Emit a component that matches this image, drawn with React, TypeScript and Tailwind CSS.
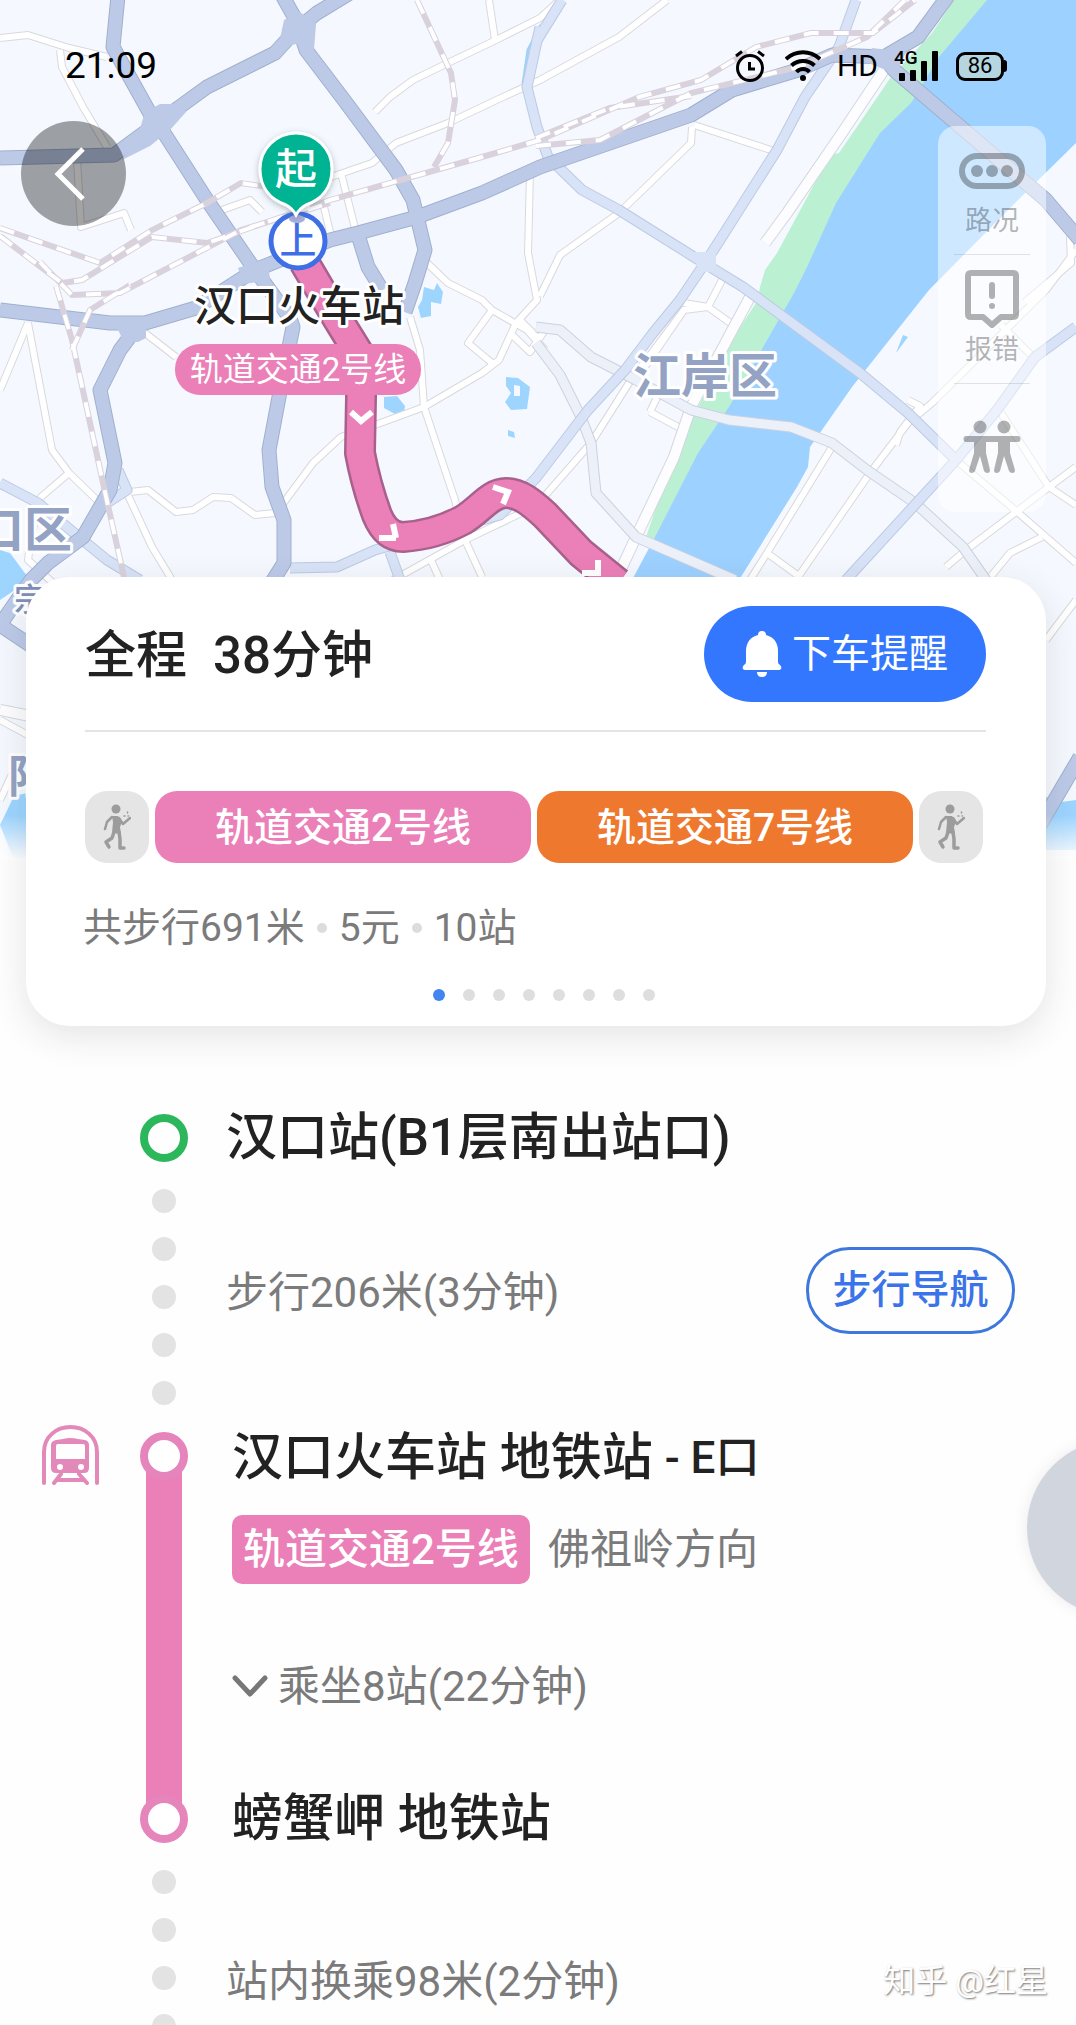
import React from "react";

type RoadSet = { paths: string[]; edge: string; fill: string; width: number };

const roadSets: RoadSet[] = [
  {
    edge: "#d9d9dd",
    fill: "#ffffff",
    width: 6,
    paths: [
      "M0 38L28 35L69 48L107 57",
      "M60 50L62 67L83 107L107 147",
      "M77 160L81 227L124 213L131 230",
      "M489 0L495 40",
      "M375 112L390 97L413 80L450 62L496 40L540 18L562 -2",
      "M331 177L372 163L396 143L448 123L503 97L540 80L619 37L667 0",
      "M341 173L356 232",
      "M324 207L331 236",
      "M222 210L250 200L262 212",
      "M530 173L528 253L537 300L516 323L499 360L482 373L424 407L375 425L341 437L313 463L282 505",
      "M540 296L560 255L619 213L691 143L692 127",
      "M427 263L448 283L482 300L492 310L527 330L545 350",
      "M492 310L468 343L492 363",
      "M520 320L540 340M510 333L530 352L545 330",
      "M410 317L420 350L424 407L455 500L465 540L482 577",
      "M28 323L52 450L69 473L100 503",
      "M28 323L0 390",
      "M69 473L41 497L31 537L28 560L52 582",
      "M120 493L148 490L176 512L193 510L213 497L231 498L255 515L275 513",
      "M127 493L152 547L172 580",
      "M145 333L176 357",
      "M393 580L465 540L536 506L591 443L629 383L684 310L708 307L736 327",
      "M430 558L440 580",
      "M694 125L777 152",
      "M722 280L708 307L684 303",
      "M684 310L660 345L636 380",
      "M650 412L663 385M650 412L680 428",
      "M832 447L767 553L750 580",
      "M767 553L800 577",
      "M1076 250L1046 290L932 403L908 423L870 473L798 577",
      "M908 400L920 406L900 432L896 445",
      "M956 460L1015 510L1076 563",
      "M1076 467L1049 487L966 550L946 567",
      "M1001 413L1049 487L1076 505",
      "M1042 537L1010 553L988 580",
      "M1070 236L1071 263L1025 302",
      "M1001 325L1036 360",
      "M1076 600L1046 640",
      "M0 720L28 735",
      "M0 800L14 770",
    ],
  },
  {
    edge: "#d3d7e0",
    fill: "#fdfdff",
    width: 10,
    paths: [
      "M884 70L842 133L787 213L765 243",
      "M750 297L691 407L674 457L636 537L616 580",
      "M0 710L30 716",
    ],
  },
  {
    edge: "#ccd1de",
    fill: "#ecf0f9",
    width: 9,
    paths: [
      "M536 327L560 330L591 357L636 380L691 410L729 420L791 427L832 443L867 470L915 503L963 547L986 580",
      "M536 343L560 375L581 417L591 443L596 493L636 537L735 580",
    ],
  },
  {
    edge: "#bccae2",
    fill: "#d8e3f7",
    width: 9,
    paths: [
      "M856 0L839 47L805 97L777 150L718 243L705 263L680 300L653 333L625 370L588 410L536 478L500 515L375 550L337 567L290 568",
      "M540 27L527 87L537 127L548 157L582 190L619 210L694 257L743 287L860 373L908 413L956 460L846 580",
      "M956 460L997 410L1035 357L1076 327",
      "M562 0L536 42",
      "M0 483L38 503L79 537L107 560L140 580",
      "M118 470L127 490L107 503",
      "M390 552L400 580",
    ],
  },
  {
    edge: "#9fb0cd",
    fill: "#bccae8",
    width: 13,
    paths: [
      "M118 -4L113 47L152 117L164 133L207 200L255 270L290 318L293 327L279 397L269 450L272 487L284 520L284 563L272 582",
      "M0 158L114 155L152 127L207 87L275 53L296 30L317 13L350 -7",
      "M282 -5L296 20L306 50L344 100L396 170L413 200L425 250L415 283L405 312",
      "M0 310L110 323L145 323L196 308L255 270L330 240L358 233L417 217L482 193L540 167L691 115L732 90L798 70L832 55L884 57L918 37L948 -4",
      "M884 57L894 70L1046 200L1080 240",
      "M138 326L120 350L100 390L115 463L110 490L83 537L48 563L31 580L0 625",
      "M0 625L30 645",
      "M358 235L368 267L382 290",
      "M1080 757L1040 825",
    ],
  },
];

const rails = [
  "M417 0L451 73L455 100L448 143L434 167",
  "M0 228L100 263L152 230L207 203L241 183L275 188",
  "M0 236L62 283L82 280L152 237L207 243L330 200L482 157L540 140L639 97L701 80L756 47L811 33L873 33L915 0",
  "M40 262L72 295L120 293L241 230L330 203",
  "M56 286L72 340L103 483L124 577",
  "M72 350L90 310L130 285",
  "M536 146L600 140L691 93L798 67L867 37L905 0",
  "M536 138L610 108L691 96",
];

const route =
  "M304 262L337 318L361 357L361 397L360 453Q366 485 377 515Q386 537 403 537Q435 535 463 520C480 510 490 493 506 493C520 493 532 503 545 515L581 553L618 583";

const cjk = 'Roboto, "Noto Sans CJK SC", sans-serif';

function MapCanvas() {
  return (
    <svg
      className="absolute inset-x-0 top-0 h-[860px] w-full"
      viewBox="0 0 1076 860"
      preserveAspectRatio="xMidYMin slice"
      role="img"
      aria-label="路线地图"
    >
      <defs>
        <linearGradient id="mapFade" x1="0" y1="0" x2="0" y2="1">
          <stop offset="0" stopColor="#fff" stopOpacity="0" />
          <stop offset="1" stopColor="#fff" />
        </linearGradient>
        <filter id="pinShadow" x="-30%" y="-30%" width="160%" height="160%">
          <feDropShadow dx="0" dy="2" stdDeviation="3" floodColor="#4b5563" floodOpacity="0.4" />
        </filter>
      </defs>
      <rect width="1076" height="860" fill="#f5f9ff" />

      <path
        d="M954 0L932 33L891 77L839 153L830 155L777 253L765 270L760 287L758 300L725 350L670 467L646 537L658 540L700 453L731 407L796 293L838 203L882 133L913 103L941 57L989 0Z"
        fill="#bcf0d2"
      />
      <path
        d="M987 0L939 57L911 103L880 133L836 203L808 265L794 293L729 407L698 453L655 537L632 580L739 580L797 487L808 467L810 447L822 430L852 387L929 290L1018 200L1076 143V0Z"
        fill="#9dd1ff"
      />
      <g fill="#9dd5ff">
        <path d="M424 287L434 290L437 283L443 292L441 304L431 302L431 316L421 318L418 307L422 300Z" />
        <path d="M384 397L397 396L405 406L404 412L395 414L384 408Z" />
        <path fillRule="evenodd" d="M506 377L518 378L530 387L527 409L511 410L505 402L511 393L506 386ZM514 385L520 386L520 396L514 396Z" />
        <path d="M508 430L514 432L515 438L508 436Z" />
        <path d="M0 550L10 553L30 580L0 600Z" />
        <path d="M14 796L40 790V860H14L0 825Z" />
        <path d="M1040 805L1076 800V850H1040Z" />
        <path d="M903 335L908 337L896 353Z" />
      </g>
      <path d="M1040 797H1062L1050 805H1040Z" fill="#b9e8d6" />
      <path d="M541 25L528 50L523 84" fill="none" stroke="#9fd2fb" strokeWidth="3" />

      {roadSets.map((set) => (
        <g key={set.fill} fill="none" strokeLinejoin="round">
          {set.paths.map((d) => (
            <path key={"e" + d} d={d} stroke={set.edge} strokeWidth={set.width + 2} />
          ))}
          {set.paths.map((d) => (
            <path key={"f" + d} d={d} stroke={set.fill} strokeWidth={set.width} />
          ))}
        </g>
      ))}
      <g fill="#bccae8">
        <path d="M138 135L145 112L160 104L178 104L186 112L170 130L150 146L122 160Z" />
        <path d="M278 48L284 20L300 12L316 24L314 50L296 44Z" />
        <path d="M238 268L268 258L270 280L244 284Z" />
        <path d="M112 318H146V338L138 342H124Z" />
        <path d="M872 48L906 52L896 74L866 62Z" />
      </g>
      <path d="M694 252H716V272H698Z" fill="#d8e3f7" />

      <g fill="none">
        {rails.map((d) => (
          <path key={"r" + d} d={d} stroke="#d9d2dc" strokeWidth="6" />
        ))}
        {rails.map((d) => (
          <path key={"w" + d} d={d} stroke="#fff" strokeWidth="4" strokeDasharray="15 15" />
        ))}
      </g>

      <g fill="none" strokeLinejoin="round">
        <path d={route} stroke="#a8608c" strokeWidth="32" />
        <path d={route} stroke="#eb7fb8" strokeWidth="27" />
      </g>
      <g fill="none" stroke="#fff" strokeWidth="6">
        <path d="M351 412L361 421L372 412" />
        <path d="M379 538H396M396 538L393 524" />
        <path d="M493 487L508 492L503 504" />
        <path d="M582 573H598V560" />
      </g>

      <g fontFamily={cjk} fontWeight="500" stroke="#fff" strokeWidth="6" strokeLinejoin="round" paintOrder="stroke">
        <g fontWeight="700" fill="#94a3c4">
          <text x="633" y="393" fontSize="48">江岸区</text>
          <text x="-24" y="547" fontSize="48">口区</text>
          <text x="8" y="793" fontSize="45">阳区</text>
        </g>
        <text x="14" y="611" fontSize="32" fill="#7f90b8">宗关</text>
        <text x="194" y="321" fontSize="42" fill="#222">汉口火车站</text>
      </g>

      <rect x="175" y="344" width="246" height="51" rx="25" fill="#eb7fb8" />
      <text x="298" y="381" fontSize="33" textAnchor="middle" fontFamily={cjk} fill="#fff">轨道交通2号线</text>

      <circle cx="298" cy="241" r="27" fill="#fff" stroke="#3f6fe6" strokeWidth="5" />
      <text x="298" y="254" fontSize="37" textAnchor="middle" fontFamily={cjk} fontWeight="500" fill="#3f6fe6">上</text>
      <ellipse cx="297" cy="219" rx="8" ry="4" fill="#a9b1dc" />
      <path
        d="M296 133A36 36 0 0 1 332 169C332 189 320 200 306 205Q300 208 296 215Q292 208 286 205C272 200 260 189 260 169A36 36 0 0 1 296 133Z"
        fill="#06b393"
        stroke="#fff"
        strokeWidth="3"
        filter="url(#pinShadow)"
      />
      <text x="296" y="184" fontSize="42" textAnchor="middle" fontFamily={cjk} fontWeight="500" fill="#fff">起</text>

      <rect y="815" width="1076" height="45" fill="url(#mapFade)" />
    </svg>
  );
}

function StatusBar() {
  return (
    <header className="relative flex h-30 items-start justify-between pt-10 pr-[69px] pl-[65px] text-black">
      <time className="text-[37px] leading-[52px]">21:09</time>
      <div className="flex h-[52px] items-center">
        <svg className="h-8 w-7.5" viewBox="0 0 30 32" fill="none" stroke="#000" strokeWidth="3" aria-label="闹钟">
          <circle cx="15" cy="18" r="12.5" />
          <path d="M14.500 12V19H20M1 6L7 1.500M29 6L23 1.500" />
        </svg>
        <svg className="ml-5 h-8 w-9" viewBox="0 0 36 32" fill="none" stroke="#000" strokeWidth="4" aria-label="无线网络">
          <path d="M1 9C11 0 25 0 35 9M6.500 15.500C13 9.500 23 9.500 29.500 15.500M11.500 22C15 18 21 18 24.500 22" />
          <circle cx="18" cy="28" r="3" fill="#000" stroke="none" />
        </svg>
        <span className="ml-4 text-[30px] leading-8">HD</span>
        <span className="relative ml-4 block h-8 w-11">
          <span className="absolute top-0 left-0 text-[19px] leading-4 font-medium">4G</span>
          <svg className="size-full" viewBox="0 0 44 32" fill="#000" aria-label="信号">
            <rect x="5" y="23" width="6" height="8" rx="1" />
            <rect x="16" y="20" width="6" height="11" rx="1" />
            <rect x="27" y="11" width="6" height="20" rx="1" />
            <rect x="38" y="1" width="6" height="30" rx="1" />
          </svg>
        </span>
        <span className="ml-[18px] flex items-center">
          <span className="flex h-[29px] w-12 items-center justify-center rounded-[9px] border-[3px] border-black bg-[#b5d5e0] text-[22px] leading-none">
            86
          </span>
          <span className="h-3 w-[3px] rounded-r bg-black" />
        </span>
      </div>
    </header>
  );
}

function MapTools() {
  return (
    <nav className="mt-1.5 flex h-[386px] w-[108px] flex-col items-center rounded-[18px] bg-white/50 text-[27px] leading-8 text-black/30">
      <button className="flex h-32 w-full flex-col items-center pt-[27px]">
        <svg className="h-9 w-[66px]" viewBox="0 0 66 36" fill="none" aria-hidden="true">
          <rect x="3" y="3" width="60" height="30" rx="15" stroke="currentColor" strokeWidth="6" />
          <g fill="currentColor">
            <circle cx="18" cy="18" r="6" />
            <circle cx="33" cy="18" r="6" />
            <circle cx="48" cy="18" r="6" />
          </g>
        </svg>
        <span className="mt-4">路况</span>
      </button>
      <hr className="w-[76px] border-black/10" />
      <button className="flex h-32 w-full flex-col items-center pt-[15px]">
        <svg className="h-[58px] w-[54px]" viewBox="0 0 54 58" fill="none" stroke="currentColor" strokeWidth="6" strokeLinejoin="round" aria-hidden="true">
          <path d="M6 3H48Q51 3 51 6V44Q51 47 48 47H36L27 55L18 47H6Q3 47 3 44V6Q3 3 6 3Z" />
          <path d="M27 15V26" strokeLinecap="round" />
          <circle cx="27" cy="36" r="3" fill="currentColor" stroke="none" />
        </svg>
        <span className="mt-1.5">报错</span>
      </button>
      <hr className="w-[76px] border-black/10" />
      <button className="flex w-full flex-1 flex-col items-center pt-9" aria-label="同行">
        <svg className="h-[54px] w-[58px]" viewBox="0 0 58 54" fill="currentColor" aria-hidden="true">
          <circle cx="17" cy="7" r="6.500" />
          <circle cx="41" cy="7" r="6.500" />
          <path d="M3 16H55Q57.500 16 57.500 19T55 22H47V33L52 50Q52 53 49.500 53T46 51L41 36L37 51Q36 53 33.500 53T31 50L35 33V22H23V33L27 50Q27 53 24.500 53T21 51L17 36L12 51Q11 53 8.500 53T6 50L11 33V22H3Q.5 22 .5 19T3 16Z" />
        </svg>
      </button>
    </nav>
  );
}

function WalkChip() {
  return (
    <span className="flex w-16 shrink-0 items-center justify-center rounded-[22px] bg-[#e5e5e5]">
      <svg className="h-[46px] w-7" viewBox="0 0 28 46" fill="none" stroke="#9c9c9c" strokeLinecap="round" strokeLinejoin="round" role="img" aria-label="步行">
        <circle cx="13" cy="5" r="4.500" fill="#9c9c9c" stroke="none" />
        <path d="M9 12H15L19 18L17 23L18 30L9 29L10 18Z" fill="#9c9c9c" stroke="none" />
        <path d="M9 13L4 18L2 25M16 14L20 20L27 14" strokeWidth="2.500" />
        <path d="M11 28L9 34L3 38L6 43M16 28L17 35V44H21" strokeWidth="3.500" />
        <path d="M21 12H22M25 12H25.500M24.500 8V9" strokeWidth="1.500" />
      </svg>
    </span>
  );
}

function SummaryCard() {
  return (
    <section className="relative mr-[30px] ml-[26px] h-[449px] rounded-[44px] bg-white pr-[60px] pl-[59px] shadow-[0_10px_36px_rgba(40,40,50,0.12)]">
      <div className="flex h-[155px] items-center justify-between border-b-2 border-[#e4e4e4]">
        <h1 className="flex gap-[26px] pt-1 text-[51px] leading-[60px] font-medium text-[#222]">
          <span>全程</span>
          <span>38分钟</span>
        </h1>
        <button className="flex h-24 w-[282px] items-center justify-center gap-2.5 rounded-full bg-[#3377ff] text-[39px] leading-[48px] text-white">
          <svg className="h-[46px] w-10" viewBox="0 0 40 46" fill="#fff" aria-hidden="true">
            <path d="M20 0Q24 0 24 4C32 6 36 12 36 20V31Q36 33 38 34Q40 36 39 38Q38 39 37 39H3Q2 39 1 38Q0 36 2 34Q4 33 4 31V20C4 12 8 6 16 4Q16 0 20 0Z" />
            <path d="M15 41H25Q25 46 20 46T15 41Z" />
          </svg>
          下车提醒
        </button>
      </div>
      <div className="mt-[59px] mr-[3px] flex h-[72px] gap-1.5 text-[39px] leading-[74px] font-medium text-white">
        <WalkChip />
        <span className="flex-1 rounded-[22px] bg-[#eb7fb8] text-center">轨道交通2号线</span>
        <span className="flex-1 rounded-[22px] bg-[#ee782e] text-center">轨道交通7号线</span>
        <WalkChip />
      </div>
      <p className="mt-10 -ml-0.5 flex items-center gap-3 text-[39px] leading-[50px] text-[#7b7b7b]">
        共步行691米
        <i className="size-2.5 rounded-full bg-[#dcdcdc]" />
        5元
        <i className="size-2.5 rounded-full bg-[#dcdcdc]" />
        10站
      </p>
      <div className="mt-9 flex justify-center gap-[18px] pl-4">
        {[0, 1, 2, 3, 4, 5, 6, 7].map((n) => (
          <button
            key={n}
            aria-label={`方案${n + 1}`}
            className={n === 0 ? "size-3 rounded-full bg-[#4285f0]" : "size-3 rounded-full bg-[#dedede]"}
          />
        ))}
      </div>
    </section>
  );
}

function Dots({ count }: { count: number }) {
  return (
    <div className="flex w-12 shrink-0 flex-col items-center gap-6 py-[27px]">
      {Array.from({ length: count }, (_, n) => (
        <span key={n} className="size-6 shrink-0 rounded-full bg-[#e3e3e3]" />
      ))}
    </div>
  );
}

function Itinerary() {
  return (
    <ol className="min-h-0 flex-1 overflow-hidden pt-[88px] text-[42px] leading-[48px] text-[#7b7b7b]">
      <li className="flex pl-[140px]">
        <span className="size-12 shrink-0 rounded-full border-8 border-[#2cb75c]" />
        <h2 className="ml-[38px] text-[51px] font-medium text-[#222]">汉口站(B1层南出站口)</h2>
      </li>
      <li className="flex pr-[61px] pl-[140px]">
        <Dots count={5} />
        <div className="flex flex-1 items-center justify-between pb-3.5 pl-[38px]">
          <p className="pt-1.5">步行206米(3分钟)</p>
          <button className="h-[87px] w-[209px] rounded-full border-[3px] border-[#3e78dc] text-[39px] leading-[48px] font-medium text-[#3a74e8]">
            步行导航
          </button>
        </div>
      </li>
      <li className="flex pl-[42px]">
        <svg className="-mt-[7px] h-[60px] w-[57px] shrink-0" viewBox="0 0 57 60" fill="none" stroke="#e389b9" strokeLinecap="round" strokeLinejoin="round" role="img" aria-label="地铁">
          <path d="M2 58V27C2 12 14 2 28.500 2S55 12 55 27V58" strokeWidth="4" />
          <path fill="#e389b9" stroke="none" fillRule="evenodd" d="M14 15L21 14Q28 12 36 14L43 15Q47 16 47 20V43Q47 48 42 48H14Q9 48 9 43V20Q9 16 14 15ZM16 19Q14 19 14 21V34H43V21Q43 19 41 19ZM18 39A3 3 0 1 0 18 45A3 3 0 1 0 18 39ZM39 39A3 3 0 1 0 39 45A3 3 0 1 0 39 39Z" />
          <path d="M19 49L12 58M37 49L45 58M16 55H41" strokeWidth="4" />
        </svg>
        <div className="ml-[41px] flex w-12 shrink-0 flex-col items-center">
          <span className="relative size-12 shrink-0 rounded-full border-8 border-[#e585bb] bg-white" />
          <span className="-my-2 w-9 flex-1 bg-[#eb7fb8]" />
          <span className="relative size-12 shrink-0 rounded-full border-8 border-[#e585bb] bg-white" />
        </div>
        <div className="ml-[44px]">
          <h2 className="flex h-12 items-center gap-3 pt-1 text-[51px] font-medium text-[#222]">
            汉口火车站 地铁站 <span className="text-[44px]">- E口</span>
          </h2>
          <p className="mt-[35px] flex items-center gap-[18px]">
            <strong className="h-[69px] rounded-[10px] bg-[#eb7fb8] px-[11px] leading-[69px] font-medium text-white">
              轨道交通2号线
            </strong>
            佛祖岭方向
          </p>
          <button className="mt-[79px] flex items-center gap-2.5">
            <svg className="h-6 w-9" viewBox="0 0 36 24" fill="none" stroke="#777" strokeWidth="5" strokeLinecap="round" strokeLinejoin="round" aria-hidden="true">
              <path d="M3 3L18 19L33 3" />
            </svg>
            乘坐8站(22分钟)
          </button>
          <h2 className="mt-[84px] text-[51px] font-medium text-[#222]">螃蟹岬 地铁站</h2>
        </div>
      </li>
      <li className="flex pl-[140px]">
        <Dots count={4} />
        <p className="mt-[115px] ml-[38px]">站内换乘98米(2分钟)</p>
      </li>
    </ol>
  );
}

export default function App() {
  return (
    <main lang="zh-CN" className="relative flex h-screen flex-col overflow-hidden bg-[#fefefe] font-[Roboto,'Noto_Sans_CJK_SC',sans-serif]">
      <MapCanvas />
      <StatusBar />
      <div className="relative flex h-[457px] items-start justify-between pr-[30px] pl-[21px]">
        <button className="mt-px flex size-[105px] items-center justify-center rounded-full bg-black/36 pr-2" aria-label="返回">
          <svg className="h-14 w-8" viewBox="0 0 32 56" fill="none" stroke="#fff" strokeWidth="5" aria-hidden="true">
            <path d="M29 3L4 28L29 53" />
          </svg>
        </button>
        <MapTools />
      </div>
      <SummaryCard />
      <Itinerary />
      <button className="absolute top-[1440px] -right-[127px] size-44 rounded-full bg-[#d1d5de] shadow-[0_0_16px_rgba(0,0,0,0.08)]" aria-label="悬浮球" />
      <p className="absolute right-7 bottom-[22px] text-[32px] leading-11 text-white [text-shadow:1px_1px_2px_#777]">知乎 @红星</p>
    </main>
  );
}
